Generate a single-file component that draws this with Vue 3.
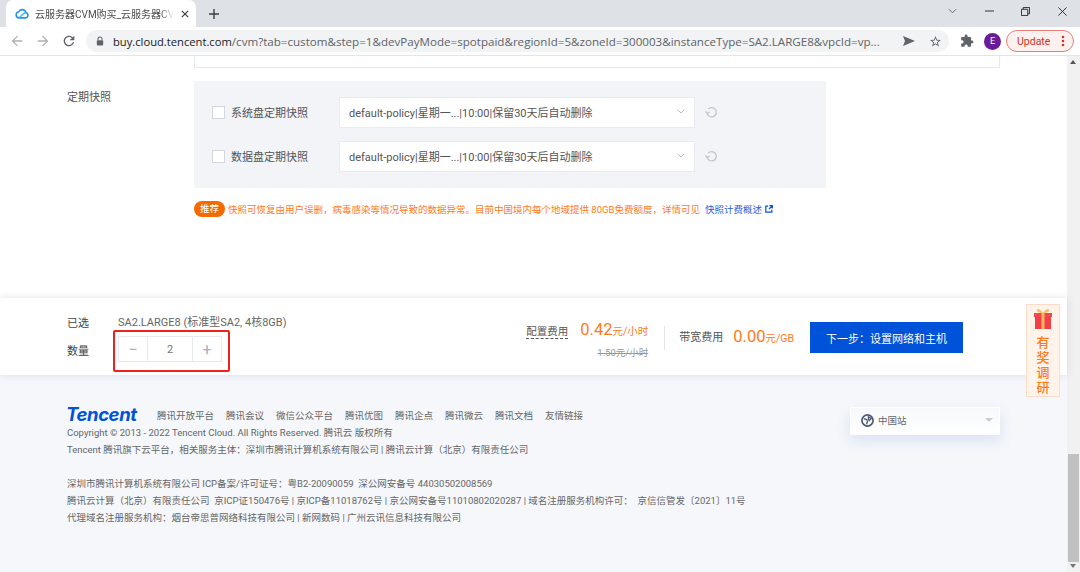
<script setup>
const links = ['腾讯开放平台', '腾讯会议', '微信公众平台', '腾讯优图', '腾讯企点', '腾讯微云', '腾讯文档', '友情链接']
const policies = [
  { name: '系统盘定期快照', value: 'default-policy|星期一...|10:00|保留30天后自动删除' },
  { name: '数据盘定期快照', value: 'default-policy|星期一...|10:00|保留30天后自动删除' }
]
const legal = [
  '深圳市腾讯计算机系统有限公司 ICP备案/许可证号：粤B2-20090059  深公网安备号 44030502008569',
  '腾讯云计算（北京）有限责任公司  京ICP证150476号 | 京ICP备11018762号 | 京公网安备号11010802020287 | 域名注册服务机构许可：  京信信管发〔2021〕11号',
  '代理域名注册服务机构：烟台帝思普网络科技有限公司 | 新网数码 | 广州云讯信息科技有限公司'
]
</script>

<template>
  <div class="screen">
    <header class="tabstrip">
      <div class="tab">
        <svg class="favicon" viewBox="0 0 16 12" width="14" height="11">
          <path d="M4 11h8a3 3 0 0 0 .6-5.900A4.500 4.500 0 0 0 4.200 4 3.600 3.600 0 0 0 4 11z" fill="none" stroke="#2a8ff0" stroke-width="1.800" />
          <path d="M4.800 10.800l4.400-4.200c1-.9 2-1.500 3.400-1.500" fill="none" stroke="#1fc7d8" stroke-width="1.600" />
        </svg>
        <span class="tab-title">云服务器CVM购买_云服务器CV</span>
        <svg class="tab-close" viewBox="0 0 10 10" width="8" height="8"><path d="M1 1l8 8M9 1l-8 8" stroke="#3c4043" stroke-width="1.500" /></svg>
      </div>
      <svg class="new-tab" viewBox="0 0 10 10" width="10" height="10"><path d="M5 0v10M0 5h10" stroke="#3c4043" stroke-width="1.400" /></svg>
      <div class="win-controls">
        <svg viewBox="0 0 10 6" width="9" height="6"><path d="M1 1l4 4 4-4" fill="none" stroke="#5f6368" stroke-width="1" /></svg>
        <svg viewBox="0 0 10 2" width="9" height="2"><path d="M0 1h10" stroke="#202124" stroke-width="1" /></svg>
        <svg viewBox="0 0 10 10" width="9" height="9"><path d="M.5 2.500h7v7h-7zM2.500 2.500v-2h7v7h-2" fill="none" stroke="#202124" stroke-width="1" /></svg>
        <svg viewBox="0 0 10 10" width="9" height="9"><path d="M.5.5l9 9M9.500.5l-9 9" stroke="#202124" stroke-width="1" /></svg>
      </div>
    </header>

    <nav class="toolbar">
      <svg class="tool" viewBox="0 0 24 24" width="16" height="16"><path d="M20 11H7.830l5.590-5.590L12 4l-8 8 8 8 1.410-1.410L7.830 13H20v-2z" fill="#aeb1b5" /></svg>
      <svg class="tool" viewBox="0 0 24 24" width="16" height="16"><path d="M4 11h12.170l-5.590-5.590L12 4l8 8-8 8-1.410-1.410L16.170 13H4v-2z" fill="#aeb1b5" /></svg>
      <svg class="tool" viewBox="0 0 24 24" width="16" height="16"><path d="M17.650 6.350C16.200 4.900 14.210 4 12 4c-4.420 0-7.990 3.580-7.990 8s3.570 8 7.990 8c3.730 0 6.840-2.550 7.730-6h-2.080c-.82 2.330-3.040 4-5.650 4-3.310 0-6-2.690-6-6s2.690-6 6-6c1.660 0 3.140.69 4.220 1.780L13 11h7V4l-2.350 2.350z" fill="#5f6368" /></svg>
      <div class="omnibox">
        <svg class="lock" viewBox="0 0 10 12" width="8" height="10"><path d="M2.500 5V3.500a2.500 2.500 0 0 1 5 0V5" fill="none" stroke="#5f6368" stroke-width="1.300" /><rect x="1" y="5" width="8" height="6.500" rx="1" fill="#5f6368" /></svg>
        <span class="url"><b>buy.cloud.tencent.com</b>/cvm?tab=custom&amp;step=1&amp;devPayMode=spotpaid&amp;regionId=5&amp;zoneId=300003&amp;instanceType=SA2.LARGE8&amp;vpcId=vp...</span>
        <svg class="send" viewBox="0 0 12 10" width="12" height="10"><path d="M0 0l12 5-12 5 2-5z" fill="#5f6368" /></svg>
        <svg class="star" viewBox="0 0 24 24" width="13" height="13"><path d="M22 9.240l-7.190-.62L12 2 9.190 8.630 2 9.240l5.460 4.730L5.820 21 12 17.270 18.180 21l-1.630-7.030L22 9.240zM12 15.400l-3.760 2.270 1-4.280-3.320-2.880 4.380-.38L12 6.100l1.710 4.040 4.380.38-3.320 2.880 1 4.280L12 15.400z" fill="#5f6368" /></svg>
      </div>
      <svg class="puzzle" viewBox="0 0 24 24" width="14" height="14"><path d="M20.500 11H19V7c0-1.100-.9-2-2-2h-4V3.500C13 2.120 11.880 1 10.500 1S8 2.120 8 3.500V5H4c-1.100 0-1.990.9-1.990 2v3.800H3.500c1.490 0 2.700 1.210 2.700 2.700s-1.210 2.700-2.700 2.700H2V20c0 1.100.9 2 2 2h3.800v-1.500c0-1.490 1.210-2.700 2.700-2.700 1.490 0 2.700 1.210 2.700 2.700V22H17c1.100 0 2-.9 2-2v-4h1.500c1.380 0 2.500-1.120 2.500-2.500S21.880 11 20.500 11z" fill="#5f6368" /></svg>
      <span class="avatar">E</span>
      <div class="update">
        <span>Update</span>
        <svg viewBox="0 0 4 12" width="4" height="12"><circle cx="2" cy="2" r="1.300" fill="#d93025" /><circle cx="2" cy="6" r="1.300" fill="#d93025" /><circle cx="2" cy="10" r="1.300" fill="#d93025" /></svg>
      </div>
    </nav>

    <div class="viewport">
      <main class="page">
        <section class="form">
          <div class="top-box"></div>
          <div class="snapshot-row">
            <span class="row-label">定期快照</span>
            <div class="panel">
              <div v-for="p in policies" :key="p.name" class="policy">
                <span class="check"></span>
                <span class="policy-name">{{ p.name }}</span>
                <div class="select">
                  <span>{{ p.value }}</span>
                  <svg viewBox="0 0 10 6" width="8" height="5"><path d="M1 1l4 4 4-4" fill="none" stroke="#b0b5bd" stroke-width="1.200" /></svg>
                </div>
                <svg class="refresh" viewBox="0 0 14 14" width="13" height="13"><path d="M3.500 3.300A5 5 0 1 1 2.400 8.200" fill="none" stroke="#c2c6cc" stroke-width="1.400" /><path d="M.6 5.800L2.400 8.200 5 6.500" fill="none" stroke="#c2c6cc" stroke-width="1.400" /></svg>
              </div>
            </div>
          </div>
          <div class="hint">
            <span class="badge">推荐</span>
            <span>快照可恢复由用户误删，病毒感染等情况导致的数据异常。目前中国境内每个地域提供 80GB免费额度，详情可见</span>
            <a class="hint-link">快照计费概述</a>
            <svg viewBox="0 0 10 10" width="8" height="8"><path d="M4 1.500H1v7.500h7.500V6" fill="none" stroke="#0052d9" stroke-width="1.500" /><path d="M5 5l4-4M5.500.8h3.700v3.700" fill="none" stroke="#0052d9" stroke-width="1.500" /></svg>
          </div>
        </section>

        <section class="buy-bar">
          <div class="selection">
            <div class="sel-row first">
              <span class="sel-label">已选</span>
              <span class="sel-value">SA2.LARGE8 (标准型SA2, 4核8GB)</span>
            </div>
            <div class="sel-row">
              <span class="sel-label">数量</span>
              <div class="stepper">
                <span class="step">−</span>
                <span class="count">2</span>
                <span class="step">+</span>
                <span class="highlight"></span>
              </div>
            </div>
          </div>
          <div class="costs">
            <div class="cost config">
              <div class="cost-line">
                <span class="cost-name dotted">配置费用</span>
                <span class="amount">0.42</span><span class="unit">元/小时</span>
              </div>
              <div class="old-price">1.50元/小时</div>
            </div>
            <span class="divider"></span>
            <div class="cost-line band">
              <span class="cost-name">带宽费用</span>
              <span class="amount">0.00</span><span class="unit">元/GB</span>
            </div>
            <button class="next">下一步：设置网络和主机</button>
          </div>
        </section>

        <footer class="footer">
          <div class="foot-text">
            <div class="foot-links">
              <span class="logo">Tencent</span>
              <span v-for="l in links" :key="l">{{ l }}</span>
            </div>
            <p class="copy">Copyright © 2013 - 2022 Tencent Cloud. All Rights Reserved. 腾讯云 版权所有</p>
            <p>Tencent 腾讯旗下云平台，相关服务主体：深圳市腾讯计算机系统有限公司 | 腾讯云计算（北京）有限责任公司</p>
            <div class="legal">
              <p v-for="l in legal" :key="l">{{ l }}</p>
            </div>
          </div>
          <div class="region">
            <svg viewBox="0 0 14 14" width="13" height="13"><circle cx="7" cy="7" r="6" fill="none" stroke="#4d5a75" stroke-width="1.800" /><path d="M3 5l3 1 1 2-1 3M8 3l3 2-2 2-1-1z" fill="none" stroke="#4d5a75" stroke-width="1.400" /></svg>
            <span>中国站</span>
            <i class="caret"></i>
          </div>
        </footer>

        <aside class="survey">
          <svg viewBox="0 0 20 22" width="20" height="22">
            <rect x="1" y="6" width="18" height="4" fill="#f04a50" />
            <rect x="2" y="10" width="16" height="12" fill="#f23f48" />
            <rect x="8.500" y="6" width="3" height="16" fill="#f9b85c" />
            <path d="M10 6C7 1 3 1 4 4c.4 1.500 3 2 6 2zm0 0c3-5 7-5 6-2-.4 1.500-3 2-6 2z" fill="#f7c25f" />
          </svg>
          <span>有</span><span>奖</span><span>调</span><span>研</span>
        </aside>
      </main>

      <div class="scrollbar">
        <i class="arrow up"></i>
        <div class="thumb"></div>
        <i class="arrow down"></i>
      </div>
    </div>
  </div>
</template>

<style>
html, body { margin: 0; overflow: hidden; }
</style>

<style scoped>
.screen {
  width: 1080px;
  height: 572px;
  display: flex;
  flex-direction: column;
  overflow: hidden;
  font-family: Roboto, "Noto Sans CJK SC", sans-serif;
  color: #444;
  background: #fff;
}
.tabstrip {
  height: 27px;
  flex: none;
  background: #dee1e6;
  display: flex;
  align-items: flex-end;
  padding-left: 6px;
}
.tab {
  width: 190px;
  height: 27px;
  box-sizing: border-box;
  background: #fff;
  border-radius: 7px 7px 0 0;
  display: flex;
  align-items: center;
  padding: 0 9px 0 9px;
}
.favicon { flex: none; }
.tab-title {
  flex: 1;
  margin-left: 6px;
  font-size: 10px;
  color: #4a4d51;
  white-space: nowrap;
  -webkit-mask-image: linear-gradient(90deg, #000 90%, transparent);
  mask-image: linear-gradient(90deg, #000 90%, transparent);
}
.tab-close { margin-left: 7px; flex: none; }
.new-tab { margin: 0 0 8px 13px; }
.win-controls {
  margin-left: auto;
  height: 22px;
  width: 141px;
  align-self: flex-start;
  display: flex;
  align-items: center;
  gap: 27.500px;
  padding-left: 9px;
  box-sizing: border-box;
}
.toolbar {
  height: 29px;
  flex: none;
  box-sizing: border-box;
  border-bottom: 1px solid #e4e5e7;
  display: flex;
  align-items: center;
  padding-left: 9px;
  background: #fff;
}
.tool { margin-right: 10px; flex: none; }
.omnibox {
  width: 863px;
  height: 22px;
  box-sizing: border-box;
  margin-left: -1px;
  background: #f1f3f4;
  border-radius: 11px;
  display: flex;
  align-items: center;
  padding: 0 8px 0 10px;
  flex: none;
}
.lock { flex: none; }
.url {
  width: 778px;
  margin-left: 9px;
  font-family: "Open Sans", sans-serif;
  font-size: 11.600px;
  color: #5f6368;
  white-space: nowrap;
  flex: none;
}
.url b { font-weight: 400; font-size: 11.200px; color: #202124; }
.send { margin-left: 12px; flex: none; }
.star { margin-left: 14px; flex: none; }
.puzzle { margin-left: 11px; flex: none; }
.avatar {
  width: 17px;
  height: 17px;
  margin-left: 10px;
  border-radius: 50%;
  background: #6a1b9a;
  color: #fff;
  font-size: 9px;
  line-height: 17px;
  text-align: center;
  flex: none;
}
.update {
  width: 68px;
  height: 22px;
  margin-left: 5px;
  box-sizing: border-box;
  border: 1px solid #e57f78;
  border-radius: 11px;
  background: #fdf1f0;
  display: flex;
  align-items: center;
  justify-content: space-between;
  padding: 0 8px 0 10px;
  font-size: 10.500px;
  color: #d93025;
  flex: none;
}
.viewport { flex: 1; display: flex; min-height: 0; }
.page {
  position: relative;
  width: 1067px;
  flex: none;
  display: flex;
  flex-direction: column;
  background: #fff;
}
.form { height: 242px; flex: none; box-sizing: border-box; padding-left: 67px; }
.top-box {
  width: 806px;
  height: 12px;
  margin-left: 127px;
  box-sizing: border-box;
  border: 1px solid #e5e8ee;
  border-top: 0;
}
.snapshot-row { display: flex; margin-top: 13px; }
.row-label { width: 127px; flex: none; font-size: 11px; line-height: 30px; padding-top: 2px; height: 30px; color: #555; }
.panel {
  width: 632px;
  height: 107px;
  box-sizing: border-box;
  background: #f2f4f8;
  padding: 16px 0 0 19px;
  display: flex;
  flex-direction: column;
  gap: 13px;
}
.policy { display: flex; align-items: center; height: 31px; }
.check {
  width: 13px;
  height: 13px;
  margin-left: -1px;
  box-sizing: border-box;
  background: #fff;
  border: 1px solid #d3d7de;
  flex: none;
}
.policy-name { width: 108px; margin-left: 6px; margin-top: -2px; font-size: 11px; color: #555; flex: none; }
.select {
  width: 356px;
  height: 31px;
  box-sizing: border-box;
  background: #fff;
  border: 1px solid #e8ebf0;
  display: flex;
  align-items: center;
  justify-content: space-between;
  padding: 0 9px 2px;
  font-size: 11px;
  color: #555;
  flex: none;
}
.refresh { margin-left: 10px; flex: none; }
.hint {
  margin: 14px 0 0 127px;
  display: flex;
  align-items: center;
  height: 14px;
  font-size: 9.500px;
  color: #ff7a1a;
  white-space: nowrap;
}
.badge {
  width: 31px;
  height: 16px;
  margin-right: 3px;
  border-radius: 8px;
  background: #f56a00;
  color: #fff;
  text-align: center;
  line-height: 16px;
  flex: none;
}
.hint-link { margin: 0 3px 0 5px; color: #2a5fd9; }
.buy-bar {
  position: relative;
  z-index: 1;
  height: 77px;
  flex: none;
  box-sizing: border-box;
  padding: 1px 104px 0 67px;
  background: #fff;
  display: flex;
  justify-content: space-between;
  box-shadow: 0 0 8px rgba(120, 130, 160, .22);
}
.selection { padding-top: 15px; }
.sel-row { display: flex; align-items: center; font-size: 11px; }
.sel-row.first { height: 14px; margin-bottom: 8px; }
.sel-label { width: 51px; flex: none; color: #444; padding-top: 1px; }
.sel-value { font-size: 11px; color: #666; }
.stepper {
  position: relative;
  display: flex;
  width: 104px;
  height: 26px;
  box-sizing: border-box;
  border: 1px solid #e6e9ef;
  color: #777;
  font-size: 11px;
  line-height: 25px;
  text-align: center;
}
.step { width: 28px; flex: none; color: #a7b0c0; font-size: 16px; }
.count { flex: 1; border: solid #e6e9ef; border-width: 0 1px; }
.highlight {
  position: absolute;
  left: -6px;
  top: -7px;
  width: 117px;
  height: 42px;
  box-sizing: border-box;
  border: 2px solid #f0201c;
  border-radius: 2px;
}
.costs { display: flex; align-items: flex-start; padding-top: 22px; }
.cost-line { display: flex; align-items: baseline; white-space: nowrap; }
.cost-name { font-size: 10.500px; color: #555; margin-right: 12px; }
.dotted { border-bottom: 1px dashed #555; line-height: 13px; }
.amount { font-size: 16.500px; line-height: 18px; color: #ff7a1a; }
.unit { font-size: 10.500px; color: #ff7a1a; }
.old-price {
  margin-top: 6px;
  text-align: right;
  font-size: 9.500px;
  color: #999;
  text-decoration: line-through;
}
.divider { width: 1px; height: 24px; margin: 5px 14px 0 16px; background: #e3e5ea; flex: none; }
.band { margin-top: 7px; }
.band .cost-name { margin-right: 10px; font-size: 11px; align-self: flex-start; }
.next {
  width: 153px;
  height: 31px;
  margin-left: 16px;
  margin-top: 1px;
  border: 0;
  background: #0052d9;
  color: #fff;
  font: 11px Roboto, "Noto Sans CJK SC", sans-serif;
  padding: 0;
}
.footer {
  flex: 1;
  background: #f5f7fb;
  display: flex;
  justify-content: space-between;
  box-sizing: border-box;
  padding: 32px 67px 0 67px;
  font-size: 9.500px;
  color: #666;
}
.foot-links { display: flex; align-items: center; gap: 12px; height: 15px; white-space: nowrap; }
.logo {
  width: 79px;
  margin-right: 0;
  font: italic 700 18.500px/15px Inter, sans-serif;
  letter-spacing: -.4px;
  color: #0052d9;
  margin-left: -1px;
}
.footer p { margin: 0; height: 17px; line-height: 17px; white-space: pre; }
.copy { margin-top: 2px !important; }
.legal { margin-top: 16.500px; }
.region {
  width: 150px;
  height: 28px;
  box-sizing: border-box;
  background: linear-gradient(#f7f8fb, #fff);
  border: 1px solid #fff;
  box-shadow: 0 6px 14px rgba(170, 185, 225, .35);
  display: flex;
  align-items: center;
  padding: 0 6px 2px 10px;
  gap: 4px;
  color: #666;
}
.caret {
  margin-left: auto;
  width: 0;
  height: 0;
  border: 4px solid transparent;
  border-top: 4px solid #ccc;
  border-bottom: 0;
}
.survey {
  position: absolute;
  z-index: 2;
  left: 1026px;
  top: 248px;
  width: 34px;
  height: 93px;
  box-sizing: border-box;
  background: #fff3ea;
  border: 1px solid #fbdcc6;
  display: flex;
  flex-direction: column;
  align-items: center;
  padding-top: 2px;
  font-size: 13px;
  font-weight: 500;
  line-height: 15px;
  color: #ff7a1a;
}
.survey svg { margin-bottom: 6px; }
.scrollbar {
  width: 13px;
  flex: none;
  background: #f1f1f1;
  position: relative;
}
.thumb {
  position: absolute;
  left: 1px;
  right: 1px;
  top: 398px;
  height: 108px;
  background: #c1c1c1;
}
.arrow {
  position: absolute;
  left: 3px;
  width: 0;
  height: 0;
  border: 3px solid transparent;
}
.up { top: 4px; border-top: 0; border-bottom: 4px solid #555; }
.down { bottom: 4px; border-bottom: 0; border-top: 4px solid #777; }
</style>
